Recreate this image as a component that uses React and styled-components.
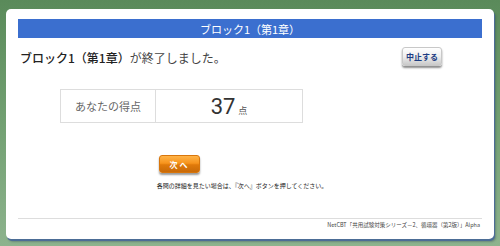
import React from "react";
import styled, {createGlobalStyle} from "styled-components";

const GlobalStyle = createGlobalStyle`
  html, body {
    margin: 0;
    padding: 0;
  }
  body {
    width: 500px;
    height: 246px;
    overflow: hidden;
    background: linear-gradient(to bottom, #5a8a5a 0%, #72a072 50%, #8db38d 100%);
    font-family: Arial, "Liberation Sans", "Noto Sans CJK JP", sans-serif;
  }
`;

const Page = styled.div`
  width: 500px;
  height: 246px;
  padding: 9px 6px 7px 6px;
  box-sizing: border-box;
`;

const Panel = styled.div`
  width: 100%;
  height: 100%;
  background: #fff;
  border-radius: 5px;
  box-shadow: 1px 2px 0 #4c6d96, 2px 3px 2px rgba(40, 60, 90, 0.35);
  padding: 10px 12px 0 12px;
  box-sizing: border-box;
  display: flex;
  flex-direction: column;
`;

const TitleBar = styled.div`
  height: 19px;
  background: #3b6fcf;
  color: #fff;
  font-size: 11px;
  display: flex;
  align-items: center;
  justify-content: center;
  font-family: "Noto Sans CJK JP", sans-serif;
`;

const HeadRow = styled.div`
  display: flex;
  justify-content: space-between;
  align-items: flex-start;
  margin-top: 9px;
  padding-left: 2px;
  padding-right: 40px;
`;

const Message = styled.div`
  font-size: 12px;
  color: #444;
  margin-top: 2px;
  font-family: "Noto Sans CJK JP", sans-serif;
`;

const Strong = styled.span`
  font-weight: 500;
  color: #222;
`;

const StopButton = styled.button`
  width: 40px;
  height: 19px;
  border: 1px solid #c8c8c8;
  border-radius: 3px;
  background: linear-gradient(to bottom, #ffffff 0%, #eeeeee 50%, #c9c9c9 100%);
  box-shadow: 0 2px 2px rgba(0, 0, 0, 0.45);
  color: #1b3c82;
  font-size: 8px;
  font-weight: bold;
  padding: 0;
  font-family: "Noto Sans CJK JP", sans-serif;
`;

const ScoreTable = styled.div`
  display: flex;
  margin: 23px 0 0 42px;
  width: 243px;
  height: 34px;
  border: 1px solid #ddd;
  box-sizing: border-box;
`;

const ScoreLabel = styled.div`
  width: 94px;
  border-right: 1px solid #ddd;
  display: flex;
  align-items: center;
  justify-content: center;
  font-size: 11px;
  color: #666;
  font-family: "Noto Sans CJK JP", sans-serif;
`;

const ScoreValue = styled.div`
  flex: 1;
  display: flex;
  align-items: baseline;
  justify-content: center;
  padding-top: 4px;
  color: #333;
`;

const Number = styled.span`
  font-size: 22px;
  font-family: Roboto, "Liberation Sans", sans-serif;
`;

const Unit = styled.span`
  font-size: 9px;
  margin-left: 3px;
  color: #555;
  font-family: "Noto Sans CJK JP", sans-serif;
`;

const NextButton = styled.button`
  width: 41px;
  height: 18px;
  margin: 32px 0 0 141px;
  border: 1px solid #d8760c;
  border-radius: 3px;
  background: linear-gradient(to bottom, #ffb347 0%, #f7941d 45%, #e07a0a 55%, #c96a08 100%);
  box-shadow: 0 2px 2px rgba(0, 0, 0, 0.4);
  color: #fff;
  font-size: 8px;
  font-weight: bold;
  padding: 0;
  letter-spacing: 2px;
  font-family: "Noto Sans CJK JP", sans-serif;
`;

const Hint = styled.div`
  margin-top: 8px;
  text-align: center;
  padding-right: 16px;
  font-size: 6px;
  color: #222;
  font-family: "Noto Sans CJK JP", sans-serif;
`;

const Divider = styled.hr`
  margin: 28px 0 0 0;
  border: none;
  border-top: 1px solid #ddd;
`;

const Footer = styled.div`
  margin-top: 2px;
  text-align: right;
  padding-right: 2px;
  font-size: 5.5px;
  color: #444;
  font-family: "Noto Sans CJK JP", sans-serif;
`;

export default function App() {
    return (
        <Page>
            <GlobalStyle/>
            <Panel>
                <TitleBar>ブロック1（第1章）</TitleBar>
                <HeadRow>
                    <Message><Strong>ブロック1（第1章）</Strong>が終了しました。</Message>
                    <StopButton>中止する</StopButton>
                </HeadRow>
                <ScoreTable>
                    <ScoreLabel>あなたの得点</ScoreLabel>
                    <ScoreValue>
                        <Number>37</Number>
                        <Unit>点</Unit>
                    </ScoreValue>
                </ScoreTable>
                <NextButton>次へ</NextButton>
                <Hint>各問の詳細を見たい場合は、『次へ』ボタンを押してください。</Hint>
                <Divider/>
                <Footer>NetCBT「共用試験対策シリーズ－2、循環器（第2版）」Alpha</Footer>
            </Panel>
        </Page>
    );
}
